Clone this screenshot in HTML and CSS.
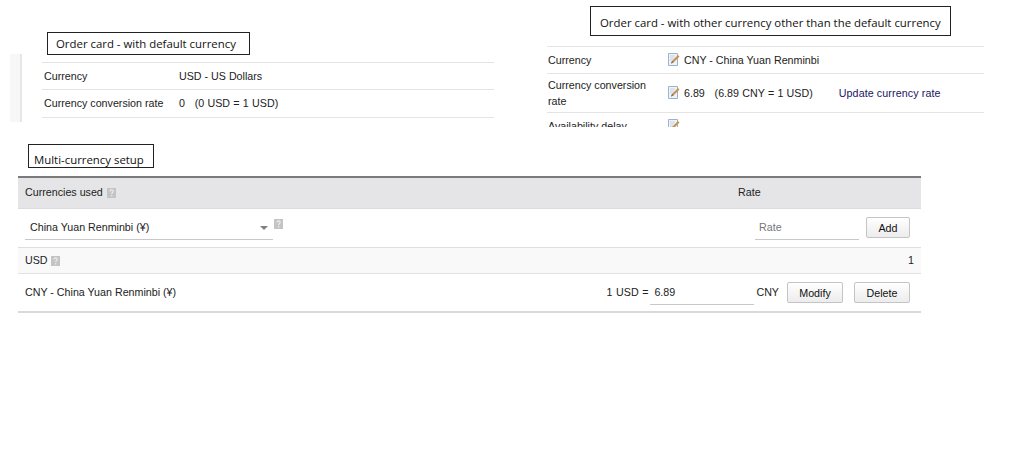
FILE: index.html
```html
<!DOCTYPE html>
<html lang="en">
<head>
<meta charset="utf-8">
<title>Multi-currency setup</title>
<link rel="stylesheet" href="styles.css">
</head>
<body>
<svg class="defs" width="0" height="0" aria-hidden="true">
  <symbol id="edit" viewBox="0 0 12 13">
    <path d="M.5.5h9v12h-9z" fill="#eef3fa" stroke="#9db2cf"/>
    <path d="M2 3h5M2 5h4M2 7h3" stroke="#c9d3e2"/>
    <path d="M3 10.500l1-2.500 6-6 1.500 1.500-6 6z" fill="#c9924c"/>
    <path d="M3 10.500l1-2.500 1.500 1.500z" fill="#6b6b6b"/>
  </symbol>
  <symbol id="help" viewBox="0 0 9 10">
    <path d="M0 0h9v10H0z" fill="#c4c4c4"/>
    <path d="M3 3.400c0-2 3.200-2 3.200-.2 0 1.300-1.500 1.300-1.500 2.800M4.700 7v1.500" fill="none" stroke="#efefef" stroke-width="1.100"/>
  </symbol>
</svg>
<div class="top">
  <section class="left">
    <div class="bar"></div>
    <div class="left-main">
      <div class="note note-default">Order card - with default currency</div>
      <div class="rows">
        <div class="row row-a"><span class="key key-a">Currency</span><span>USD - US Dollars</span></div>
        <div class="row row-b"><span class="key key-a">Currency conversion rate</span><span class="pre">0   (0 USD = 1 USD)</span></div>
      </div>
    </div>
  </section>
  <section class="right">
    <div class="note note-other">Order card - with other currency other than the default currency</div>
    <div class="rows">
      <div class="row row-c"><span class="key key-b">Currency</span><svg class="edit"><use href="#edit"/></svg><span>CNY - China Yuan Renminbi</span></div>
      <div class="row row-d"><span class="key key-b">Currency conversion rate</span><svg class="edit"><use href="#edit"/></svg><span class="pre">6.89   (6.89 CNY = 1 USD)</span><a class="link">Update currency rate</a></div>
      <div class="row row-e"><span class="key key-b">Availability delay</span><svg class="edit"><use href="#edit"/></svg></div>
    </div>
  </section>
</div>
<section class="setup">
  <div class="note note-multi">Multi-currency setup</div>
  <div class="table">
    <div class="t-head">
      <span class="grow">Currencies used <svg class="help"><use href="#help"/></svg></span>
      <span class="rate-head">Rate</span>
    </div>
    <div class="t-add">
      <div class="select"><span>China Yuan Renminbi (¥)</span><i class="caret"></i></div>
      <svg class="help help-up"><use href="#help"/></svg>
      <div class="grow"></div>
      <div class="field field-rate">Rate</div>
      <button class="btn btn-add">Add</button>
    </div>
    <div class="t-usd">
      <span class="grow">USD <svg class="help help-usd"><use href="#help"/></svg></span>
      <span>1</span>
    </div>
    <div class="t-cny">
      <span class="grow">CNY - China Yuan Renminbi (¥)</span>
      <span class="eq">1 USD =</span>
      <div class="field field-val">6.89</div>
      <span class="unit">CNY</span>
      <button class="btn btn-mod">Modify</button>
      <button class="btn btn-del">Delete</button>
    </div>
  </div>
</section>
</body>
</html>
```
FILE: styles.css
```css
* { box-sizing: border-box; }
html, body { margin: 0; padding: 0; }
body {
  width: 1024px;
  height: 453px;
  overflow: hidden;
  background: #fff;
  color: #222;
  font: 10.7px/14px "Liberation Sans", Arial, sans-serif;
}
.defs { display: block; height: 0; }
.pre { white-space: pre; word-spacing: .3px; }
.grow { flex: 1; }

.top { display: flex; height: 127px; }
.left { display: flex; margin-left: 10px; width: 484px; }
.bar {
  width: 12px;
  height: 68px;
  margin-top: 54px;
  background: #f7f7f7;
  border-right: 2px solid #e6e6e6;
}
.left-main { margin-left: 20px; width: 452px; padding-top: 32px; }
.right { margin-left: 53px; width: 437px; padding-top: 6px; height: 121px; box-sizing: content-box; overflow: hidden; }

.note {
  border: 1px solid #222;
  background: #fff;
  color: #111;
  font: 11.4px/1 "Open Sans", sans-serif;
  display: flex;
  align-items: center;
}
.note-default { margin-left: 5px; width: 203px; height: 23px; padding-left: 8px; }
.note-other { margin-left: 43px; width: 361px; height: 30px; padding: 4px 0 0 9px; }
.note-multi { margin-left: 28px; width: 126px; height: 24px; padding: 8px 0 0 5px; }

.rows { border-top: 1px solid #e4e4e4; }
.left-main .rows { margin-top: 7px; }
.right .rows { margin-top: 10px; }
.row { display: flex; align-items: center; border-bottom: 1px solid #e4e4e4; padding: 0 0 1px 2px; }
.right .row { padding-left: 1px; }
.row-a { height: 27px; }
.row-b { height: 28px; padding-bottom: 2px; }
.row-c { height: 27px; }
.row-d { height: 39px; }
.row-e { height: 27px; }
.key-a { width: 135px; }
.key-b { width: 120px; padding-right: 8px; line-height: 16px; }
.edit { width: 12px; height: 13px; margin-right: 4px; flex: none; }
.link { margin-left: 26px; color: #1a1464; letter-spacing: .1px; }

.setup { padding-top: 17px; }
.table { margin: 8px 0 0 18px; width: 903px; border-top: 2px solid #7a7a7a; }
.t-head, .t-add, .t-usd, .t-cny { display: flex; align-items: center; padding: 0 7px; }
.t-head { height: 31px; background: #e5e5e7; border-bottom: 1px solid #dcdcdc; padding-bottom: 2px; }
.rate-head { width: 176px; }
.t-add { height: 39px; border-bottom: 1px solid #dedede; padding-right: 11px; }
.t-usd { height: 26px; background: #f9f9f9; border-bottom: 1px solid #e2e2e2; padding-bottom: 2px; }
.t-cny { height: 39px; border-bottom: 2px solid #d9d9d9; padding-right: 11px; }
.help { width: 9px; height: 10px; vertical-align: -2px; margin-left: 1px; }
.help-usd { margin-left: 0; }
.help-up { margin: -8px 0 0 1px; }
.select {
  display: flex;
  align-items: center;
  justify-content: space-between;
  width: 248px;
  height: 24px;
  padding: 0 5px 2px 5px;
  border-bottom: 1px solid #c8c8c8;
}
.caret {
  width: 0;
  height: 0;
  margin-top: 2px;
  border-left: 4px solid transparent;
  border-right: 4px solid transparent;
  border-top: 4px solid #808080;
}
.field {
  height: 24px;
  display: flex;
  align-items: center;
  width: 104px;
  border-bottom: 1px solid #c8c8c8;
  padding-left: 4px;
}
.field-rate { color: #777; padding-bottom: 2px; }
.field-val { margin: 0 2px 0 2px; }
.t-cny > span { margin-bottom: 1px; }
.eq { word-spacing: .6px; }
.btn {
  height: 21px;
  padding: 0;
  background: linear-gradient(#fff, #ececec);
  border: 1px solid #c4c4c4;
  border-radius: 2px;
  color: #111;
  font: 10.7px "Liberation Sans", Arial, sans-serif;
}
.btn-add { width: 44px; margin: 0 0 1px 7px; }
.btn-mod { width: 56px; margin-left: 8px; }
.btn-del { width: 56px; margin-left: 11px; }
```
